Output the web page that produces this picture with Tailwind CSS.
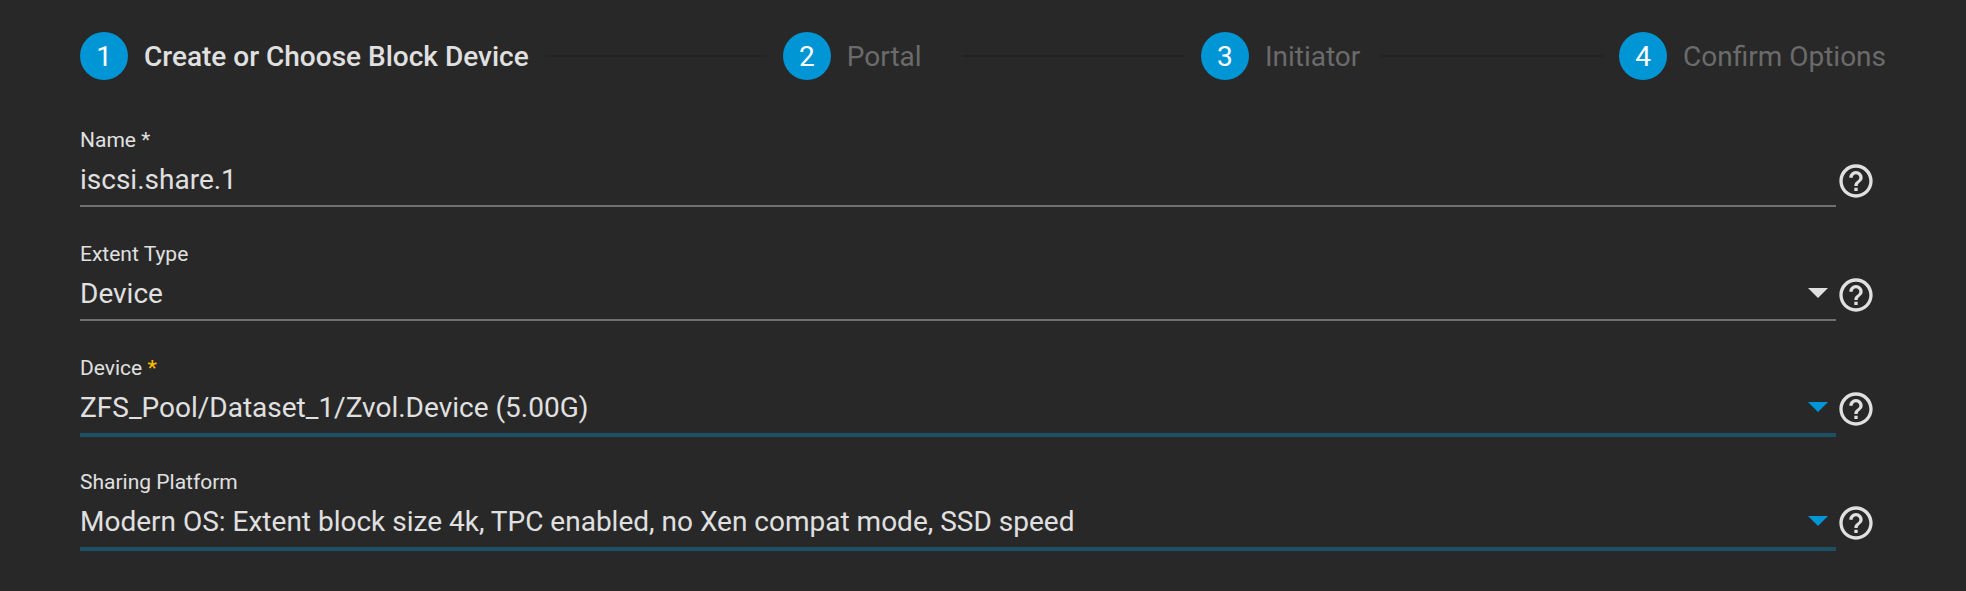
<!DOCTYPE html>
<html lang="en">
<head>
<meta charset="utf-8">
<title>iSCSI Wizard</title>
<script src="https://cdn.jsdelivr.net/npm/@tailwindcss/browser@4"></script>
</head>
<body class="min-h-screen bg-[#282828] font-['Roboto',sans-serif] text-[#e0e0e0]">
<svg class="hidden" aria-hidden="true">
  <symbol id="help" viewBox="0 0 24 24"><path fill="currentColor" d="M11 18h2v-2h-2v2zm1-16C6.48 2 2 6.48 2 12s4.480 10 10 10 10-4.480 10-10S17.520 2 12 2zm0 18c-4.410 0-8-3.590-8-8s3.590-8 8-8 8 3.590 8 8-3.590 8-8 8zm0-14c-2.210 0-4 1.790-4 4h2c0-1.100.9-2 2-2s2 .9 2 2c0 2-3 1.750-3 5h2c0-2.250 3-2.500 3-5 0-2.210-1.790-4-4-4z"/></symbol>
  <symbol id="caret" viewBox="0 0 20 10"><path fill="currentColor" d="M0 0h20L10 10z"/></symbol>
</svg>
<main>
  <ol class="flex items-center gap-4 px-20 pt-8 text-[28px] leading-8">
    <li class="flex items-center gap-4 whitespace-nowrap" aria-current="step"><span class="grid size-12 place-items-center rounded-full bg-[#0095d5] pt-[2px] text-white">1</span><span class="pt-[2px] font-medium">Create or Choose Block Device</span></li>
    <li class="h-[2px] flex-1 bg-[#222222]" aria-hidden="true"></li>
    <li class="flex items-center gap-4 whitespace-nowrap"><span class="grid size-12 place-items-center rounded-full bg-[#0095d5] pt-[2px] text-white">2</span><span class="min-w-[100px] pt-[2px] text-[#6b6b6b]">Portal</span></li>
    <li class="h-[2px] flex-1 bg-[#222222]" aria-hidden="true"></li>
    <li class="flex items-center gap-4 whitespace-nowrap"><span class="grid size-12 place-items-center rounded-full bg-[#0095d5] pt-[2px] text-white">3</span><span class="min-w-[100px] pt-[2px] text-[#6b6b6b]">Initiator</span></li>
    <li class="h-[2px] flex-1 bg-[#222222]" aria-hidden="true"></li>
    <li class="flex items-center gap-4 whitespace-nowrap"><span class="grid size-12 place-items-center rounded-full bg-[#0095d5] pt-[2px] text-white">4</span><span class="pt-[2px] text-[#6b6b6b]">Confirm Options</span></li>
  </ol>
  <form class="grid auto-rows-[114px] pt-12 pr-[90px] pl-20">
    <div class="flex items-start">
      <div class="flex flex-1 flex-col gap-[11px]">
        <label for="name" class="text-[21px] leading-6">Name *</label>
        <input id="name" type="text" value="iscsi.share.1" class="h-11 w-full border-b-2 border-[#707070] bg-transparent pb-[10px] text-[28px] leading-8 outline-none">
      </div>
      <button type="button" aria-label="Help for Name" class="mt-[33px]"><svg class="size-10"><use href="#help"/></svg></button>
    </div>
    <div class="flex items-start">
      <div class="flex flex-1 flex-col gap-[11px]">
        <label for="type" class="text-[21px] leading-6">Extent Type</label>
        <div class="relative">
          <select id="type" class="block h-11 w-full appearance-none border-b-2 border-[#707070] bg-transparent pt-px pb-[9px] text-[28px] leading-8 outline-none"><option>Device</option></select>
          <svg class="pointer-events-none absolute top-[11px] right-2 h-[10px] w-5"><use href="#caret"/></svg>
        </div>
      </div>
      <button type="button" aria-label="Help for Extent Type" class="mt-[33px]"><svg class="size-10"><use href="#help"/></svg></button>
    </div>
    <div class="flex items-start">
      <div class="flex flex-1 flex-col gap-[11px]">
        <label for="device" class="text-[21px] leading-6">Device <span class="font-medium text-[#fdbb00]">*</span></label>
        <div class="relative">
          <select id="device" class="block h-[46px] w-full appearance-none border-b-4 border-[#1c5066] bg-transparent pt-px pb-[9px] text-[28px] leading-8 outline-none"><option>ZFS_Pool/Dataset_1/Zvol.Device (5.00G)</option></select>
          <svg class="pointer-events-none absolute top-[11px] right-2 h-[10px] w-5 text-[#0095d5]"><use href="#caret"/></svg>
        </div>
      </div>
      <button type="button" aria-label="Help for Device" class="mt-[33px]"><svg class="size-10"><use href="#help"/></svg></button>
    </div>
    <div class="flex items-start">
      <div class="flex flex-1 flex-col gap-[11px]">
        <label for="platform" class="text-[21px] leading-6">Sharing Platform</label>
        <div class="relative">
          <select id="platform" class="block h-[46px] w-full appearance-none border-b-4 border-[#1c5066] bg-transparent pt-px pb-[9px] text-[28px] leading-8 outline-none"><option>Modern OS: Extent block size 4k, TPC enabled, no Xen compat mode, SSD speed</option></select>
          <svg class="pointer-events-none absolute top-[11px] right-2 h-[10px] w-5 text-[#0095d5]"><use href="#caret"/></svg>
        </div>
      </div>
      <button type="button" aria-label="Help for Sharing Platform" class="mt-[33px]"><svg class="size-10"><use href="#help"/></svg></button>
    </div>
  </form>
</main>
</body>
</html>
